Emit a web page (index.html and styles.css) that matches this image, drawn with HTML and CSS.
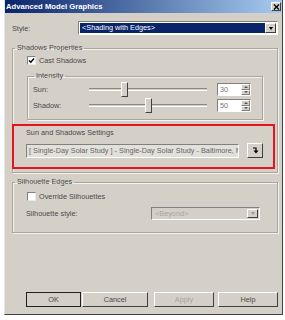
FILE: index.html
```html
<!doctype html>
<html>
    <head>
        <meta charset="utf-8">
        <title>Advanced Model Graphics</title>
        <link rel="stylesheet" href="styles.css">
    </head>
    <body>
        <div class="window">
            <div class="titlebar">
                <span class="title">Advanced Model Graphics</span>
                <span class="close">
                    <svg width="7" height="6" viewBox="0 0 7 6"><path d="M1 0.5L6 5.5M6 0.5L1 5.5" stroke="#000" stroke-width="1.3"/></svg>
                </span>
            </div>
            <div class="content">
                <div class="style-row">
                    <span class="style-label">Style:</span>
                    <div class="combo">
                        <span class="combo-value selected">&lt;Shading with Edges&gt;</span>
                        <span class="combo-arrow"></span>
                    </div>
                </div>

                <fieldset class="group shadows">
                    <legend>Shadows Properties</legend>
                    <div class="check">
                        <span class="box">
                            <svg width="7" height="7" viewBox="0 0 7 7"><path d="M1 3.5L2.8 5.3L6 1.5" fill="none" stroke="#000" stroke-width="1.4"/></svg>
                        </span>
                        Cast Shadows
                    </div>

                    <fieldset class="group intensity">
                        <legend>Intensity</legend>
                        <div class="slider-row">
                            <span class="slider-label">Sun:</span>
                            <div class="slider"><span class="thumb" style="margin-left:calc(30% - 3px)"></span></div>
                            <div class="spin">
                                <span class="spin-value">30</span>
                                <span class="spin-btns"><span class="spin-up"></span><span class="spin-down"></span></span>
                            </div>
                        </div>
                        <div class="slider-row">
                            <span class="slider-label">Shadow:</span>
                            <div class="slider"><span class="thumb" style="margin-left:calc(50% - 3px)"></span></div>
                            <div class="spin">
                                <span class="spin-value">50</span>
                                <span class="spin-btns"><span class="spin-up"></span><span class="spin-down"></span></span>
                            </div>
                        </div>
                    </fieldset>

                    <div class="callout">
                        <div class="callout-title">Sun and Shadows Settings</div>
                        <div class="sun-row">
                            <div class="sun-field">[ Single-Day Solar Study ] - Single-Day Solar Study - Baltimore, M</div>
                            <span class="more">
                                <svg width="7" height="7" viewBox="0 0 7 7"><path d="M1 1H4V4" fill="none" stroke="#000" stroke-width="1.2"/><path d="M1.5 3.5H6.5L4 6.5Z" fill="#000"/></svg>
                            </span>
                        </div>
                    </div>
                </fieldset>

                <fieldset class="group silhouette">
                    <legend>Silhouette Edges</legend>
                    <div class="check"><span class="box"></span>Override Silhouettes</div>
                    <div class="sil-row">
                        <span class="sil-label">Silhouette style:</span>
                        <div class="combo disabled">
                            <span class="combo-value">&lt;Beyond&gt;</span>
                            <span class="combo-arrow"></span>
                        </div>
                    </div>
                </fieldset>

                <div class="buttons">
                    <span class="btn btn-ok">OK</span>
                    <span class="btn btn-cancel">Cancel</span>
                    <span class="btn btn-apply off">Apply</span>
                    <span class="btn btn-help">Help</span>
                </div>
            </div>
        </div>
    </body>
</html>
```

FILE: styles.css
```css
*{box-sizing:border-box;}
body{
    margin:0;
    background:#fff;
    font-family:"Liberation Sans",Arial,sans-serif;
    font-size:7.3px;
    color:#4a4a4a;
}
.window{
    width:279px;
    height:315px;
    margin-left:4px;
    background:#d4d0c8;
    border:1px solid;
    border-top:none;
    border-color:#e6e4de #404040 #404040 #e6e4de;
}
.titlebar{
    height:13px;
    display:flex;
    align-items:center;
    justify-content:space-between;
    padding:0 1px 0 1px;
    background:linear-gradient(to right,#0a246a,#a6caf0);
}
.title{
    color:#fff;
    font-weight:bold;
    font-size:7.7px;
}
.close{
    width:10px;
    height:9px;
    display:flex;
    align-items:center;
    justify-content:center;
    background:#d4d0c8;
    border:1px solid;
    border-color:#fff #404040 #404040 #fff;
}
.content{
    padding:8px 4px 0 7px;
}
.style-row{
    display:flex;
    height:14px;
    align-items:center;
}
.style-label{width:66px;}
.combo{
    flex:1;
    height:14px;
    display:flex;
    padding:1px;
    border:1px solid;
    border-color:#808080 #fff #fff #808080;
    background:#fff;
}
.combo-value{
    flex:1;
    line-height:10px;
    padding-left:2px;
}
.combo-value.selected{
    background:#0a246a;
    color:#fff;
}
.combo-arrow{
    width:11px;
    display:flex;
    align-items:center;
    justify-content:center;
    background:#d4d0c8;
    border:1px solid;
    border-color:#fff #404040 #404040 #fff;
}
.combo-arrow::after{
    content:"";
    border-left:2.5px solid transparent;
    border-right:2.5px solid transparent;
    border-top:3px solid #000;
}
.group{
    margin:0;
    padding:0;
    min-width:0;
    border:1px solid #a9a59d;
    box-shadow:inset 1px 1px 0 #f4f2ee,1px 1px 0 #f4f2ee;
}
.group legend{
    line-height:10px;
    padding:0 2px;
    margin-left:2px;
}
.shadows{
    margin-top:8px;
    padding-bottom:3px;
}
.check{
    display:flex;
    align-items:center;
    height:10px;
    margin:2px 0 0 14px;
}
.box{
    width:9px;
    height:9px;
    margin-right:3px;
    display:flex;
    align-items:center;
    justify-content:center;
    background:#fff;
    border:1px solid;
    border-color:#808080 #e8e8e8 #e8e8e8 #808080;
}
.intensity{
    width:236px;
    margin:6px 0 0 14px;
    padding:1px 0 5px 5px;
}
.intensity legend{margin-left:1px;}
.slider-row{
    display:flex;
    align-items:center;
    height:15px;
    margin-bottom:1px;
}
.slider-label{width:56px;}
.slider{
    width:118px;
    height:15px;
    display:flex;
    background:linear-gradient(#8a8680,#8a8680) 0 6px/100% 1px no-repeat,
               linear-gradient(#fff,#fff) 0 8px/100% 1px no-repeat;
}
.thumb{
    width:7px;
    height:15px;
    background:#d4d0c8;
    border:1px solid;
    border-color:#fff #404040 #404040 #fff;
}
.spin{
    display:flex;
    height:13px;
    margin-left:10px;
    border:1px solid;
    border-color:#808080 #fff #fff #808080;
    background:#fff;
}
.spin-value{
    width:23px;
    line-height:11px;
    padding-left:2px;
    color:#777;
}
.spin-btns{
    width:9px;
    display:flex;
    flex-direction:column;
}
.spin-up,.spin-down{
    flex:1;
    display:flex;
    align-items:center;
    justify-content:center;
    background:#d4d0c8;
    border:1px solid;
    border-color:#fff #808080 #808080 #fff;
}
.spin-up::after{
    content:"";
    border-left:2px solid transparent;
    border-right:2px solid transparent;
    border-bottom:2px solid #555;
}
.spin-down::after{
    content:"";
    border-left:2px solid transparent;
    border-right:2px solid transparent;
    border-top:2px solid #555;
}
.callout{
    width:263px;
    margin:4px 0 0 -1px;
    padding:2px 0 9px 12px;
    border:2px solid #e4151f;
}
.callout-title{line-height:10px;}
.sun-row{
    display:flex;
    align-items:center;
    margin-top:5px;
}
.sun-field{
    width:213px;
    height:14px;
    line-height:12px;
    padding-left:2px;
    white-space:nowrap;
    overflow:hidden;
    color:#666;
    background:#e2e0da;
    border:1px solid;
    border-color:#808080 #fff #fff #808080;
}
.more{
    width:16px;
    height:15px;
    margin-left:8px;
    display:flex;
    align-items:center;
    justify-content:center;
    background:#d4d0c8;
    border:1px solid;
    border-color:#fff #404040 #404040 #fff;
}
.silhouette{
    margin-top:4px;
    padding-bottom:12px;
}
.silhouette .check{margin-top:4px;}
.sil-row{
    display:flex;
    align-items:center;
    height:13px;
    margin:6px 0 0 13px;
}
.sil-label{width:125px;}
.combo.disabled{
    flex:none;
    width:109px;
    height:13px;
    background:#d4d0c8;
    color:#a8a6a0;
}
.combo.disabled .combo-arrow::after{border-top-color:#999;}
.buttons{
    display:flex;
    margin:59px 0 0 14px;
}
.btn{
    height:15px;
    display:flex;
    align-items:center;
    justify-content:center;
    background:#d4d0c8;
    border:1px solid;
    border-color:#fff #404040 #404040 #fff;
}
.btn-ok{width:55px;border-color:#202020;}
.btn-cancel{width:66px;margin-left:1px;}
.btn-apply{width:60px;margin-left:6px;}
.btn-help{width:60px;margin-left:4px;}
.off{color:#a8a6a0;}
```
